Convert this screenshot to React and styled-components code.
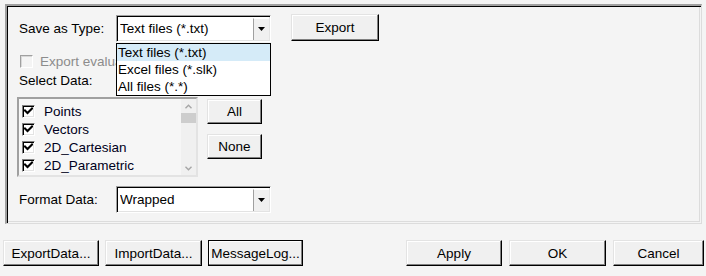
import React from 'react';
import styled, { createGlobalStyle, css } from 'styled-components';

const Global = createGlobalStyle`
  html, body { margin: 0; padding: 0; background: #f4f4f4; }
  body {
    font-family: "Liberation Sans", Arial, sans-serif;
    font-size: 13.5px;
    color: #000;
  }
  #root { width: 706px; height: 276px; overflow: hidden; }
`;

const Page = styled.div`
  width: 706px;
  height: 276px;
  box-sizing: border-box;
  padding: 4px 4px 0 5px;
  display: flex;
  flex-direction: column;
`;

const Frame = styled.div`
  height: 220px;
  box-sizing: border-box;
  border-style: solid;
  border-width: 2px 1px 1px 2px;
  border-color: #a0a0a0 #dcdcdc #dcdcdc #a0a0a0;
  box-shadow: inset 1px 1px 0 #000, inset -1px -1px 0 #f4f4f4, inset -2px -2px 0 #dcdcdc;
  padding: 9px 0 0 10px;
  display: flex;
  flex-direction: column;
`;

const Row = styled.div`
  display: flex;
  align-items: center;
  margin-top: ${p => p.$mt || 0}px;
`;

const Label = styled.div`
  width: 97px;
  padding-left: 2px;
  white-space: nowrap;
`;

const ComboWrap = styled.div`
  position: relative;
  width: 155px;
  height: 27px;
`;

const Combo = styled.div`
  width: 100%;
  height: 100%;
  box-sizing: border-box;
  background: #fff;
  border-style: solid;
  border-width: 1px;
  border-color: #a0a0a0 #fff #fff #a0a0a0;
  box-shadow: inset 1px 1px 0 #000, inset -1px -1px 0 #e3e3e3;
  display: flex;
  align-items: center;
  padding: 0 1px 0 3px;
`;

const ComboText = styled.span`
  flex: 1;
  white-space: nowrap;
  overflow: hidden;
`;

const DropButton = styled.div`
  width: 16px;
  height: 22px;
  box-sizing: border-box;
  background: #f0f0f0;
  border-left: 1px solid #a0a0a0;
  border-top: 1px solid #fff;
  display: flex;
  align-items: center;
  justify-content: center;
`;

const Popup = styled.div`
  position: absolute;
  top: 28px;
  left: 0;
  width: 155px;
  height: 53px;
  box-sizing: border-box;
  border: 1px solid #000;
  background: #fff;
  z-index: 5;
  display: flex;
  flex-direction: column;
`;

const PopupItem = styled.div`
  height: 17px;
  line-height: 17px;
  padding-left: 1px;
  white-space: nowrap;
  background: ${p => (p.$active ? '#d5ebf8' : 'transparent')};
`;

const bevel = css`
  box-sizing: border-box;
  background: #f0f0f0;
  border: 1px solid;
  border-color: #e3e3e3 #000 #000 #e3e3e3;
  box-shadow: inset -1px -1px 0 #808080, inset 1px 1px 0 #fff;
  font: inherit;
  color: #000;
  padding: 0;
  display: flex;
  align-items: center;
  justify-content: center;
  white-space: nowrap;
`;

const Button = styled.button`
  ${bevel};
  width: ${p => p.$w}px;
  height: ${p => p.$h || 26}px;
  margin-left: ${p => p.$ml || 0}px;
  margin-top: ${p => p.$mt || 0}px;
  ${p =>
    p.$default &&
    css`
      border-color: #000;
      box-shadow: inset -1px -1px 0 #808080, inset 1px 1px 0 #fff;
    `}
`;

const CheckRow = styled.div`
  display: flex;
  align-items: center;
  height: 14px;
  margin-top: 12px;
  padding-left: 3px;
  gap: 7px;
  color: #8c8c8c;
  white-space: nowrap;
`;

const HiddenTail = styled.span`
  max-width: 77px;
  overflow: hidden;
  white-space: nowrap;
`;

const Box = styled.span`
  width: 13px;
  height: 13px;
  box-sizing: border-box;
  flex: none;
  background: ${p => (p.$disabled ? '#f4f4f4' : '#fff')};
  border: 1px solid;
  border-color: ${p => (p.$disabled ? '#a0a0a0 #fff #fff #a0a0a0' : '#808080 #fff #fff #808080')};
  box-shadow: ${p => (p.$disabled ? 'inset 1px 1px 0 #d8d8d8' : 'inset 1px 1px 0 #000, inset -1px -1px 0 #e3e3e3')};
  display: flex;
  align-items: center;
  justify-content: center;
`;

const SubLabel = styled.div`
  height: 14px;
  line-height: 14px;
  margin-top: 6px;
  padding-left: 2px;
`;

const ListRow = styled.div`
  display: flex;
  gap: 9px;
  margin-top: 9px;
`;

const ListBox = styled.div`
  width: 181px;
  height: 80px;
  box-sizing: border-box;
  border: 2px solid;
  border-color: #a0a0a0 #e3e3e3 #e3e3e3 #a0a0a0;
  background: #f6f6f6;
  display: flex;
`;

const Items = styled.div`
  flex: 1;
  padding: 3px 0 0 3px;
  display: flex;
  flex-direction: column;
`;

const Item = styled.div`
  height: 18px;
  display: flex;
  align-items: center;
  gap: 9px;
  white-space: nowrap;
  color: #000020;
`;

const ScrollBar = styled.div`
  width: 15px;
  display: flex;
  flex-direction: column;
  background: #f0f0f0;
`;

const ScrollArrow = styled.div`
  height: 14px;
  display: flex;
  align-items: center;
  justify-content: center;
`;

const Thumb = styled.div`
  height: 10px;
  background: #cdcdcd;
`;

const Track = styled.div`
  flex: 1;
`;

const SideButtons = styled.div`
  display: flex;
  flex-direction: column;
  gap: 10px;
  padding-top: 2px;
`;

const BottomBar = styled.div`
  display: flex;
  justify-content: space-between;
  margin: 16px -2px 0 -2px;
`;

const Group = styled.div`
  display: flex;
  gap: ${p => p.$gap || 6}px;
`;

const Triangle = () => (
  <svg width="7" height="4" viewBox="0 0 7 4">
    <path d="M0 0H7L3.5 4Z" fill="#000" />
  </svg>
);

const Check = () => (
  <svg width="9" height="9" viewBox="0 0 9 9">
    <path d="M1 3.5L3.5 6L8 1.5" stroke="#000" strokeWidth="2" fill="none" strokeLinecap="square" />
  </svg>
);

const Chevron = ({ down }) => (
  <svg width="7" height="5" viewBox="0 0 7 5">
    <path
      d={down ? 'M0.5 0.8L3.5 3.8L6.5 0.8' : 'M0.5 4.2L3.5 1.2L6.5 4.2'}
      stroke="#a6a6a6"
      strokeWidth="1.4"
      fill="none"
    />
  </svg>
);

const DropCombo = ({ value, children }) => (
  <ComboWrap>
    <Combo>
      <ComboText>{value}</ComboText>
      <DropButton>
        <Triangle />
      </DropButton>
    </Combo>
    {children}
  </ComboWrap>
);

const dataItems = ['Points', 'Vectors', '2D_Cartesian', '2D_Parametric'];
const types = ['Text files (*.txt)', 'Excel files (*.slk)', 'All files (*.*)'];

export default function App() {
  return (
    <>
      <Global />
      <Page>
        <Frame>
          <Row>
            <Label>Save as Type:</Label>
            <DropCombo value="Text files (*.txt)">
              <Popup>
                {types.map((t, i) => (
                  <PopupItem key={t} $active={i === 0}>{t}</PopupItem>
                ))}
              </Popup>
            </DropCombo>
            <Button $w={88} $h={27} $ml={20} $mt={-2}>Export</Button>
          </Row>
          <CheckRow>
            <Box $disabled />
            <HiddenTail>Export evaluated data</HiddenTail>
          </CheckRow>
          <SubLabel>Select Data:</SubLabel>
          <ListRow>
            <ListBox>
              <Items>
                {dataItems.map(d => (
                  <Item key={d}>
                    <Box><Check /></Box>
                    <span>{d}</span>
                  </Item>
                ))}
              </Items>
              <ScrollBar>
                <ScrollArrow><Chevron /></ScrollArrow>
                <Thumb />
                <Track />
                <ScrollArrow><Chevron down /></ScrollArrow>
              </ScrollBar>
            </ListBox>
            <SideButtons>
              <Button $w={55} $h={25}>All</Button>
              <Button $w={55} $h={25}>None</Button>
            </SideButtons>
          </ListRow>
          <Row $mt={9}>
            <Label>Format Data:</Label>
            <DropCombo value="Wrapped" />
          </Row>
        </Frame>
        <BottomBar>
          <Group $gap={6}>
            <Button $w={96}>ExportData...</Button>
            <Button $w={97}>ImportData...</Button>
            <Button $w={95} $default>MessageLog...</Button>
          </Group>
          <Group $gap={7}>
            <Button $w={96}>Apply</Button>
            <Button $w={97}>OK</Button>
            <Button $w={91}>Cancel</Button>
          </Group>
        </BottomBar>
      </Page>
    </>
  );
}
